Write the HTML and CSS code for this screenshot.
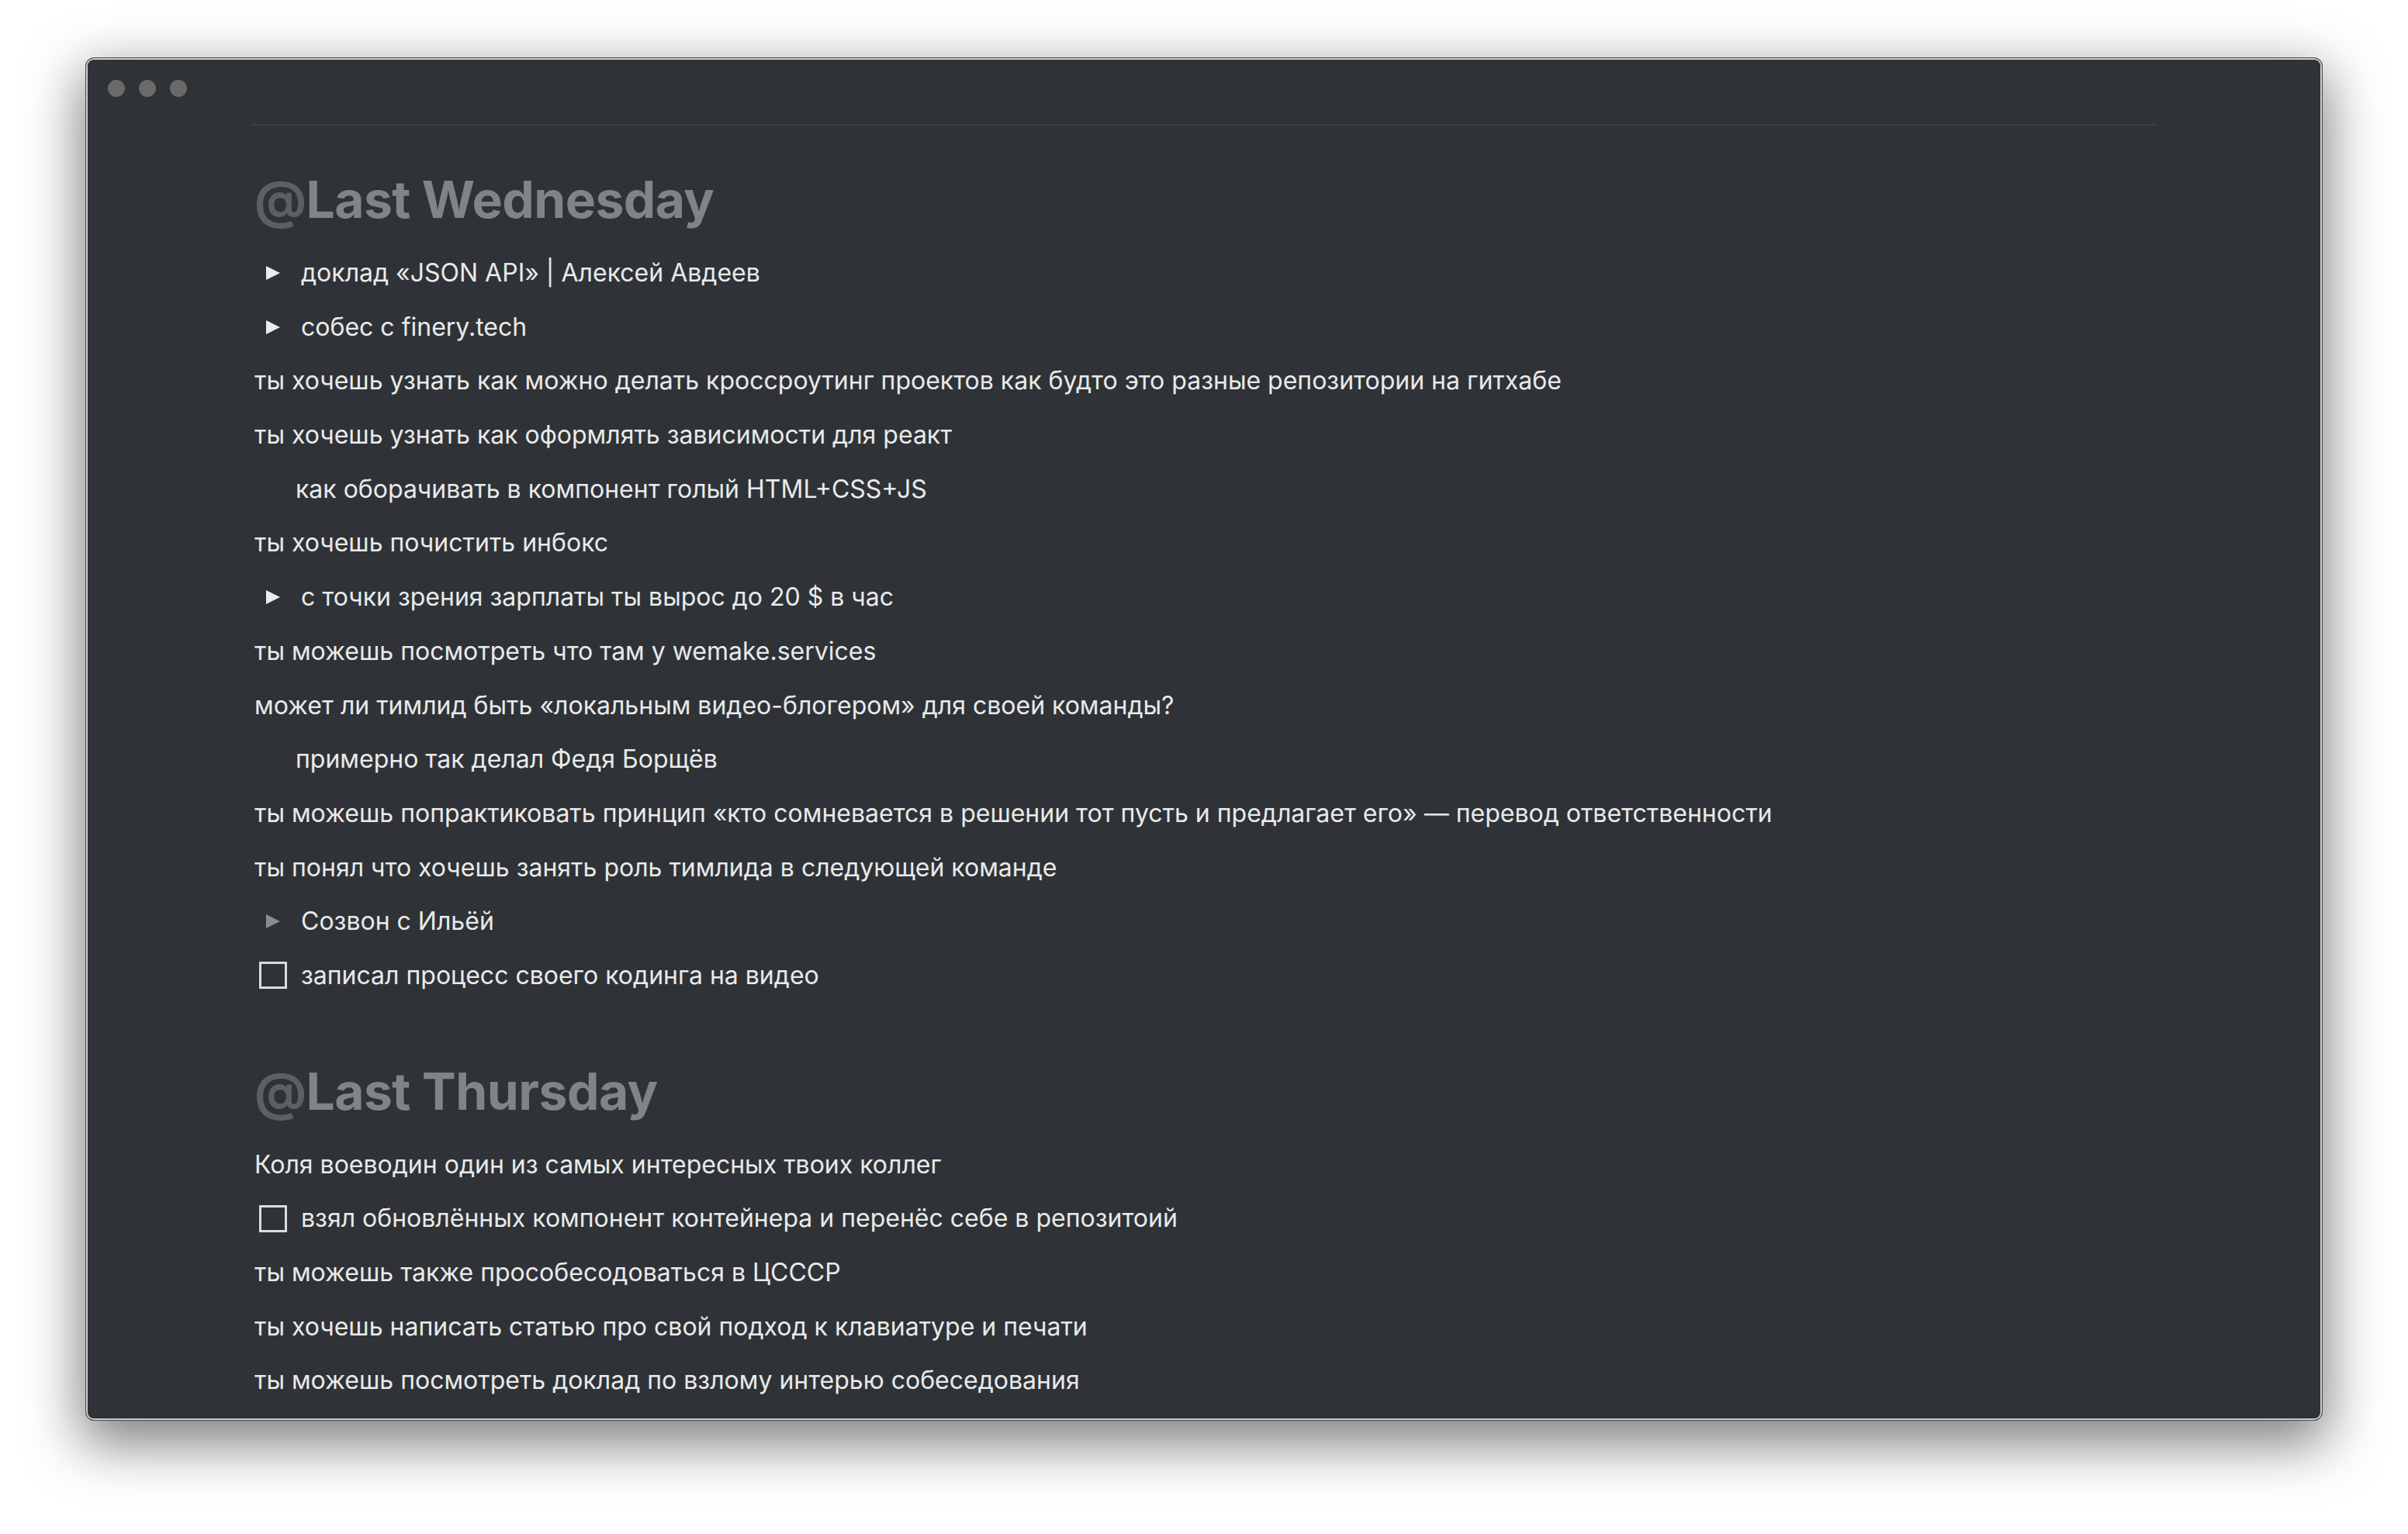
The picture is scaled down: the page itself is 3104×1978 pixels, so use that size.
FILE: index.html
```html
<!DOCTYPE html>
<html lang="ru">
<head>
<meta charset="utf-8">
<title>Notes</title>
<link rel="stylesheet" href="styles.css">
</head>
<body>
<div class="window">
  <div class="titlebar">
    <span class="dot"></span><span class="dot"></span><span class="dot"></span>
  </div>
  <main class="page">
    <section class="day day-first">
      <h1 class="day-title"><span class="at">@</span>Last Wednesday</h1>
      <div class="row toggle"><span class="tri"></span><span class="txt">доклад «JSON API» | Алексей Авдеев</span></div>
      <div class="row toggle"><span class="tri"></span><span class="txt">собес с finery.tech</span></div>
      <div class="row">ты хочешь узнать как можно делать кроссроутинг проектов как будто это разные репозитории на гитхабе</div>
      <div class="row">ты хочешь узнать как оформлять зависимости для реакт</div>
      <div class="row nested">как оборачивать в компонент голый HTML+CSS+JS</div>
      <div class="row">ты хочешь почистить инбокс</div>
      <div class="row toggle"><span class="tri"></span><span class="txt">с точки зрения зарплаты ты вырос до 20 $ в час</span></div>
      <div class="row">ты можешь посмотреть что там у wemake.services</div>
      <div class="row">может ли тимлид быть «локальным видео-блогером» для своей команды?</div>
      <div class="row nested">примерно так делал Федя Борщёв</div>
      <div class="row">ты можешь попрактиковать принцип «кто сомневается в решении тот пусть и предлагает его» — перевод ответственности</div>
      <div class="row">ты понял что хочешь занять роль тимлида в следующей команде</div>
      <div class="row toggle"><span class="tri tri-dim"></span><span class="txt">Созвон с Ильёй</span></div>
      <div class="row todo"><span class="box"></span><span class="txt">записал процесс своего кодинга на видео</span></div>
    </section>
    <section class="day">
      <h1 class="day-title"><span class="at">@</span>Last Thursday</h1>
      <div class="row">Коля воеводин один из самых интересных твоих коллег</div>
      <div class="row todo"><span class="box"></span><span class="txt">взял обновлённых компонент контейнера и перенёс себе в репозитоий</span></div>
      <div class="row">ты можешь также прособесодоваться в ЦСССР</div>
      <div class="row">ты хочешь написать статью про свой подход к клавиатуре и печати</div>
      <div class="row">ты можешь посмотреть доклад по взлому интерью собеседования</div>
    </section>
  </main>
</div>
</body>
</html>
```
FILE: styles.css
```css
html, body {
  margin: 0;
  padding: 0;
}
body {
  background: #ffffff;
  width: 3104px;
  height: 1978px;
  overflow: hidden;
  font-family: Inter, "Noto Sans", "Liberation Sans", sans-serif;
}
.window {
  margin: 74px 110px 0 110px;
  height: 1758px;
  box-sizing: border-box;
  background: #2f3337;
  border: 1px solid #4a4a4a;
  border-radius: 11px;
  box-shadow: inset 0 0 0 2px #cdcdcd, 0 24px 70px 6px rgba(0, 0, 0, 0.5);
  overflow: hidden;
}
.titlebar {
  height: 85px;
  box-sizing: border-box;
  padding: 28px 0 0 28px;
  display: flex;
  gap: 18px;
}
.dot {
  width: 22px;
  height: 22px;
  border-radius: 50%;
  background: #6a6a6a;
}
.page {
  margin-left: 213px;
  width: 2456px;
  border-top: 2px solid #3a3e42;
}
.day-first {
  padding-top: 54px;
}
.day + .day {
  margin-top: 73px;
}
.day-title {
  margin: 0 0 19px 0;
  font-size: 66px;
  line-height: 82px;
  font-weight: 700;
  letter-spacing: -0.6px;
  color: #808487;
  padding-left: 4px;
}
.at {
  color: #5c6063;
}
.row {
  height: 69.7px;
  line-height: 69.7px;
  font-size: 32px;
  color: #e9eaea;
  padding-left: 4px;
  white-space: nowrap;
  display: flex;
  align-items: center;
}
.nested {
  padding-left: 57px;
}
.tri {
  width: 0;
  height: 0;
  margin-left: 15px;
  margin-right: 27px;
  border-top: 9.5px solid transparent;
  border-bottom: 9.5px solid transparent;
  border-left: 18px solid #ececec;
}
.tri-dim {
  border-left-color: #8a8c8e;
}
.box {
  width: 36px;
  height: 35px;
  box-sizing: border-box;
  border: 3px solid #dcdcdc;
  margin-left: 6px;
  margin-right: 18px;
  flex: none;
}
```
